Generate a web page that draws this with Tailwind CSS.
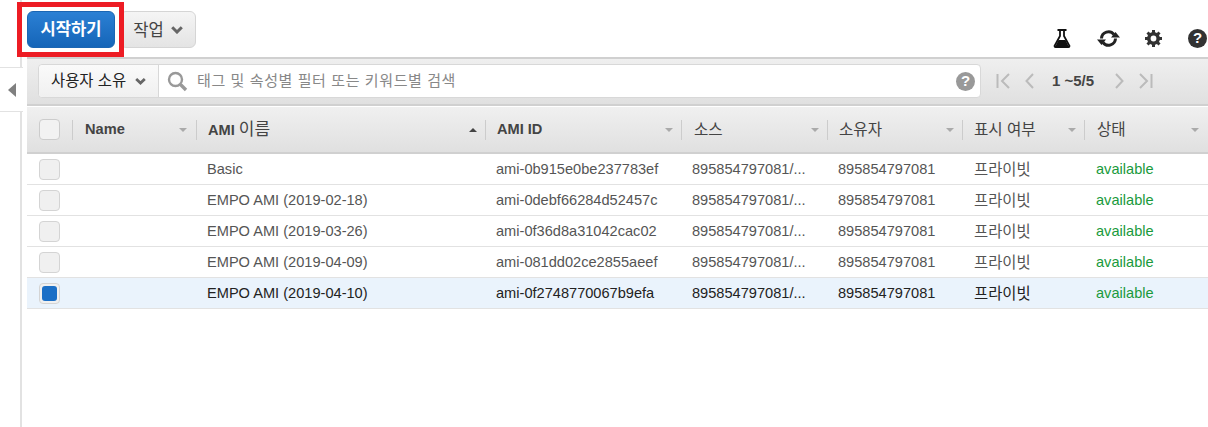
<!DOCTYPE html>
<html lang="ko">
<head>
    <meta charset="UTF-8">
    <title>AMI</title>
    <script src="https://cdn.jsdelivr.net/npm/@tailwindcss/browser@4"></script>
</head>
<body class="bg-white overflow-hidden font-['Liberation_Sans','Noto_Sans_CJK_KR',sans-serif]">
<div class="relative w-[1208px] h-[427px] flex">
    <!-- 왼쪽 접기 탭 -->
    <div class="w-[22px] h-full border-r-2 border-[#e2e2e2] shrink-0"></div>
    <div class="absolute left-0 top-[67px] w-[23px] h-[45px] bg-white border-y border-[#e2e2e2] flex items-center justify-center">
        <svg width="8" height="14" viewBox="0 0 8 14"><path d="M8 0v14L0 7z" fill="#808080"/></svg>
    </div>

    <div class="flex-1 min-w-0 pl-[5px]">
        <!-- 상단 버튼 -->
        <div class="h-[57px] flex items-start pt-[11px] relative">
            <button class="w-[88px] h-[37px] pt-[2px] rounded-[6px] border border-[#1b66b3] bg-gradient-to-b from-[#2b80d4] to-[#1565b8] text-white text-[16.6px] font-bold">시작하기</button>
            <button class="ml-[5px] w-[76px] h-[37px] rounded-[6px] border border-[#d5d5d5] bg-gradient-to-b from-[#f5f5f5] to-[#e4e4e4] text-[#444] text-[16.6px] flex items-center justify-center gap-[7px]">
                <span class="pt-[3px]">작업</span>
                <svg width="12" height="8" viewBox="0 0 12 8"><path d="M1.200 1.200 6 6l4.800-4.800" fill="none" stroke="#666" stroke-width="3"/></svg>
            </button>
            <div class="absolute right-0 top-[29px] flex items-center">
                <svg class="mr-[26px]" width="18" height="19" viewBox="0 0 18 19"><path d="M4.500 1h9M7 1v6L1.500 17a1 1 0 0 0 1 1h13a1 1 0 0 0 1-1L11 7V1" fill="none" stroke="#111" stroke-width="1.800"/><path d="M5.500 11h7l3.500 7H2z" fill="#111"/></svg>
                <svg class="mr-[25px]" width="23" height="19" viewBox="0 0 23 19"><path d="M4.500 9.500A7 7 0 0 1 17 5.500M18.500 9.500A7 7 0 0 1 6 13.500" fill="none" stroke="#222" stroke-width="3"/><path d="M14 8.500h9l-4.500-5.500zM0 10.500h9L4.500 16z" fill="#222"/></svg>
                <svg class="mr-[26px]" width="17" height="17" viewBox="0 0 17 17"><circle cx="8.500" cy="8.500" r="4.700" fill="none" stroke="#333" stroke-width="3.600"/><path d="M8.500 0v3M8.500 14v3M0 8.500h3M14 8.500h3M2.500 2.500l2.200 2.200M12.300 12.300l2.200 2.200M14.500 2.500l-2.200 2.200M4.700 12.300l-2.200 2.200" stroke="#333" stroke-width="3"/></svg>
                <div class="mr-[1px] w-[19px] h-[19px] rounded-full bg-[#333] text-white text-[15px] font-bold flex items-center justify-center">?</div>
            </div>
        </div>

        <!-- 필터 바 -->
        <div class="h-[49px] border-t-2 border-b-2 border-[#d0d0d0] bg-gradient-to-b from-[#efefef] to-[#e0e0e0] flex items-center pl-[11px] pb-[1px]">
            <div class="w-[943px] h-[34px] bg-white border border-[#d8d8d8] rounded-[4px] flex items-center">
                <div class="w-[120px] h-full shrink-0 border-r border-[#d8d8d8] bg-gradient-to-b from-[#fafafa] to-[#f0f0f0] rounded-l-[4px] flex items-center pl-[12px] gap-[9px] text-[15.400px] text-[#222] whitespace-nowrap">
                    사용자 소유
                    <svg width="11" height="7" viewBox="0 0 11 7"><path d="M1.200 1 5.500 5l4.300-4" fill="none" stroke="#666" stroke-width="2.800"/></svg>
                </div>
                <svg class="ml-[8px] shrink-0" width="21" height="21" viewBox="0 0 21 21"><circle cx="8.500" cy="8.500" r="6.500" fill="none" stroke="#999" stroke-width="2.400"/><path d="M13.500 13.500 19 19" stroke="#999" stroke-width="3.400"/></svg>
                <span class="ml-[9px] text-[15px] text-[#888] tracking-[0.6px] whitespace-nowrap">태그 및 속성별 필터 또는 키워드별 검색</span>
                <div class="ml-auto mr-[5px] w-[19px] h-[19px] rounded-full bg-[#999] text-white text-[15px] font-bold flex items-center justify-center">?</div>
            </div>
            <div class="ml-[15px] flex items-center">
                <svg width="14" height="16" viewBox="0 0 14 16"><path d="M1.500 1v14M13 1 6 8l7 7" fill="none" stroke="#bbb" stroke-width="2"/></svg>
                <svg class="ml-[15px]" width="9" height="16" viewBox="0 0 9 16"><path d="M8 1 1.500 8 8 15" fill="none" stroke="#bbb" stroke-width="2"/></svg>
                <span class="ml-[18px] w-[50px] text-[15px] font-bold text-[#444] whitespace-nowrap">1 ~5/5</span>
                <svg class="ml-[13px]" width="9" height="16" viewBox="0 0 9 16"><path d="M1 1l6.500 7L1 15" fill="none" stroke="#bbb" stroke-width="2"/></svg>
                <svg class="ml-[15px]" width="14" height="16" viewBox="0 0 14 16"><path d="M12.500 1v14M1 1l7 7-7 7" fill="none" stroke="#bbb" stroke-width="2"/></svg>
            </div>
        </div>

        <!-- 표 헤더 -->
        <div class="h-[47px] mt-[1px] border-b-2 border-[#d0d0d0] bg-gradient-to-b from-[#f0f0f0] to-[#e0e0e0] flex items-center text-[14.600px] text-[#444]">
            <div class="w-[45px] flex items-center pl-[12px]"><span class="w-[21px] h-[21px] rounded-[4px] border border-[#ccc] bg-[#f2f2f2]"></span></div>
            <div class="w-[124px] h-[20px] border-l border-[#ccc] flex items-center pl-[12px] pr-[9px] justify-between font-bold">Name<i class="w-0 h-0 border-x-[4px] border-x-transparent border-t-[4px] border-t-[#aaa]"></i></div>
            <div class="w-[289px] h-[20px] border-l border-[#ccc] flex items-center pl-[11px] pr-[8px] justify-between font-bold"><span>AMI <span class="text-[17px] font-normal">이름</span></span><i class="w-0 h-0 border-x-[4px] border-x-transparent border-b-[4px] border-b-[#444]"></i></div>
            <div class="w-[196px] h-[20px] border-l border-[#ccc] flex items-center pl-[11px] pr-[8px] justify-between font-bold">AMI ID<i class="w-0 h-0 border-x-[4px] border-x-transparent border-t-[4px] border-t-[#aaa]"></i></div>
            <div class="w-[146px] h-[20px] border-l border-[#ccc] flex items-center pl-[12px] pr-[8px] justify-between text-[15.600px]">소스<i class="w-0 h-0 border-x-[4px] border-x-transparent border-t-[4px] border-t-[#aaa]"></i></div>
            <div class="w-[135px] h-[20px] border-l border-[#ccc] flex items-center pl-[11px] pr-[8px] justify-between text-[15.600px]">소유자<i class="w-0 h-0 border-x-[4px] border-x-transparent border-t-[4px] border-t-[#aaa]"></i></div>
            <div class="w-[122px] h-[20px] border-l border-[#ccc] flex items-center pl-[11px] pr-[8px] justify-between text-[15.600px]">표시 여부<i class="w-0 h-0 border-x-[4px] border-x-transparent border-t-[4px] border-t-[#aaa]"></i></div>
            <div class="w-[124px] h-[20px] border-l border-[#ccc] flex items-center pl-[12px] pr-[9px] justify-between text-[15.600px]">상태<i class="w-0 h-0 border-x-[4px] border-x-transparent border-t-[4px] border-t-[#aaa]"></i></div>
        </div>

        <!-- 표 행 -->
        <div class="h-[31px] border-b border-[#e2e2e2] flex items-center text-[14.600px] text-[#555] [&>div]:pt-[2px]">
            <div class="w-[45px] pl-[12px]"><span class="block -mt-[2px] w-[21px] h-[21px] rounded-[4px] border border-[#d4d4d4] bg-[#f0f0f0]"></span></div>
            <div class="w-[135px]"></div>
            <div class="w-[289px]">Basic</div>
            <div class="w-[196px]">ami-0b915e0be237783ef</div>
            <div class="w-[146px]">895854797081/...</div>
            <div class="w-[135px]">895854797081</div>
            <div class="w-[123px] pl-[1px] text-[15.400px]">프라이빗</div>
            <div class="text-[#1a9a3c]">available</div>
        </div>
        <div class="h-[31px] border-b border-[#e2e2e2] flex items-center text-[14.600px] text-[#555] [&>div]:pt-[2px]">
            <div class="w-[45px] pl-[12px]"><span class="block -mt-[2px] w-[21px] h-[21px] rounded-[4px] border border-[#d4d4d4] bg-[#f0f0f0]"></span></div>
            <div class="w-[135px]"></div>
            <div class="w-[289px]">EMPO AMI (2019-02-18)</div>
            <div class="w-[196px]">ami-0debf66284d52457c</div>
            <div class="w-[146px]">895854797081/...</div>
            <div class="w-[135px]">895854797081</div>
            <div class="w-[123px] pl-[1px] text-[15.400px]">프라이빗</div>
            <div class="text-[#1a9a3c]">available</div>
        </div>
        <div class="h-[31px] border-b border-[#e2e2e2] flex items-center text-[14.600px] text-[#555] [&>div]:pt-[2px]">
            <div class="w-[45px] pl-[12px]"><span class="block -mt-[2px] w-[21px] h-[21px] rounded-[4px] border border-[#d4d4d4] bg-[#f0f0f0]"></span></div>
            <div class="w-[135px]"></div>
            <div class="w-[289px]">EMPO AMI (2019-03-26)</div>
            <div class="w-[196px]">ami-0f36d8a31042cac02</div>
            <div class="w-[146px]">895854797081/...</div>
            <div class="w-[135px]">895854797081</div>
            <div class="w-[123px] pl-[1px] text-[15.400px]">프라이빗</div>
            <div class="text-[#1a9a3c]">available</div>
        </div>
        <div class="h-[31px] border-b border-[#e2e2e2] flex items-center text-[14.600px] text-[#555] [&>div]:pt-[2px]">
            <div class="w-[45px] pl-[12px]"><span class="block -mt-[2px] w-[21px] h-[21px] rounded-[4px] border border-[#d4d4d4] bg-[#f0f0f0]"></span></div>
            <div class="w-[135px]"></div>
            <div class="w-[289px]">EMPO AMI (2019-04-09)</div>
            <div class="w-[196px]">ami-081dd02ce2855aeef</div>
            <div class="w-[146px]">895854797081/...</div>
            <div class="w-[135px]">895854797081</div>
            <div class="w-[123px] pl-[1px] text-[15.400px]">프라이빗</div>
            <div class="text-[#1a9a3c]">available</div>
        </div>
        <div class="h-[31px] border-b border-[#e2e2e2] bg-[#eaf3fc] flex items-center text-[14.600px] text-[#222] [&>div]:pt-[2px]">
            <div class="w-[45px] pl-[12px]"><span class="flex items-center justify-center -mt-[2px] w-[21px] h-[21px] rounded-[4px] border border-[#d4d4d4] bg-[#f0f0f0]"><i class="block w-[15px] h-[15px] rounded-[3px] bg-[#1b6fc6]"></i></span></div>
            <div class="w-[135px]"></div>
            <div class="w-[289px]">EMPO AMI (2019-04-10)</div>
            <div class="w-[196px]">ami-0f2748770067b9efa</div>
            <div class="w-[146px]">895854797081/...</div>
            <div class="w-[135px]">895854797081</div>
            <div class="w-[123px] pl-[1px] text-[15.400px]">프라이빗</div>
            <div class="text-[#1a9a3c]">available</div>
        </div>
    </div>

    <!-- 빨간 강조 박스 -->
    <div class="absolute left-[17px] top-[2px] w-[107px] h-[55px] border-[5px] border-[#ed1c24]"></div>
</div>
</body>
</html>
